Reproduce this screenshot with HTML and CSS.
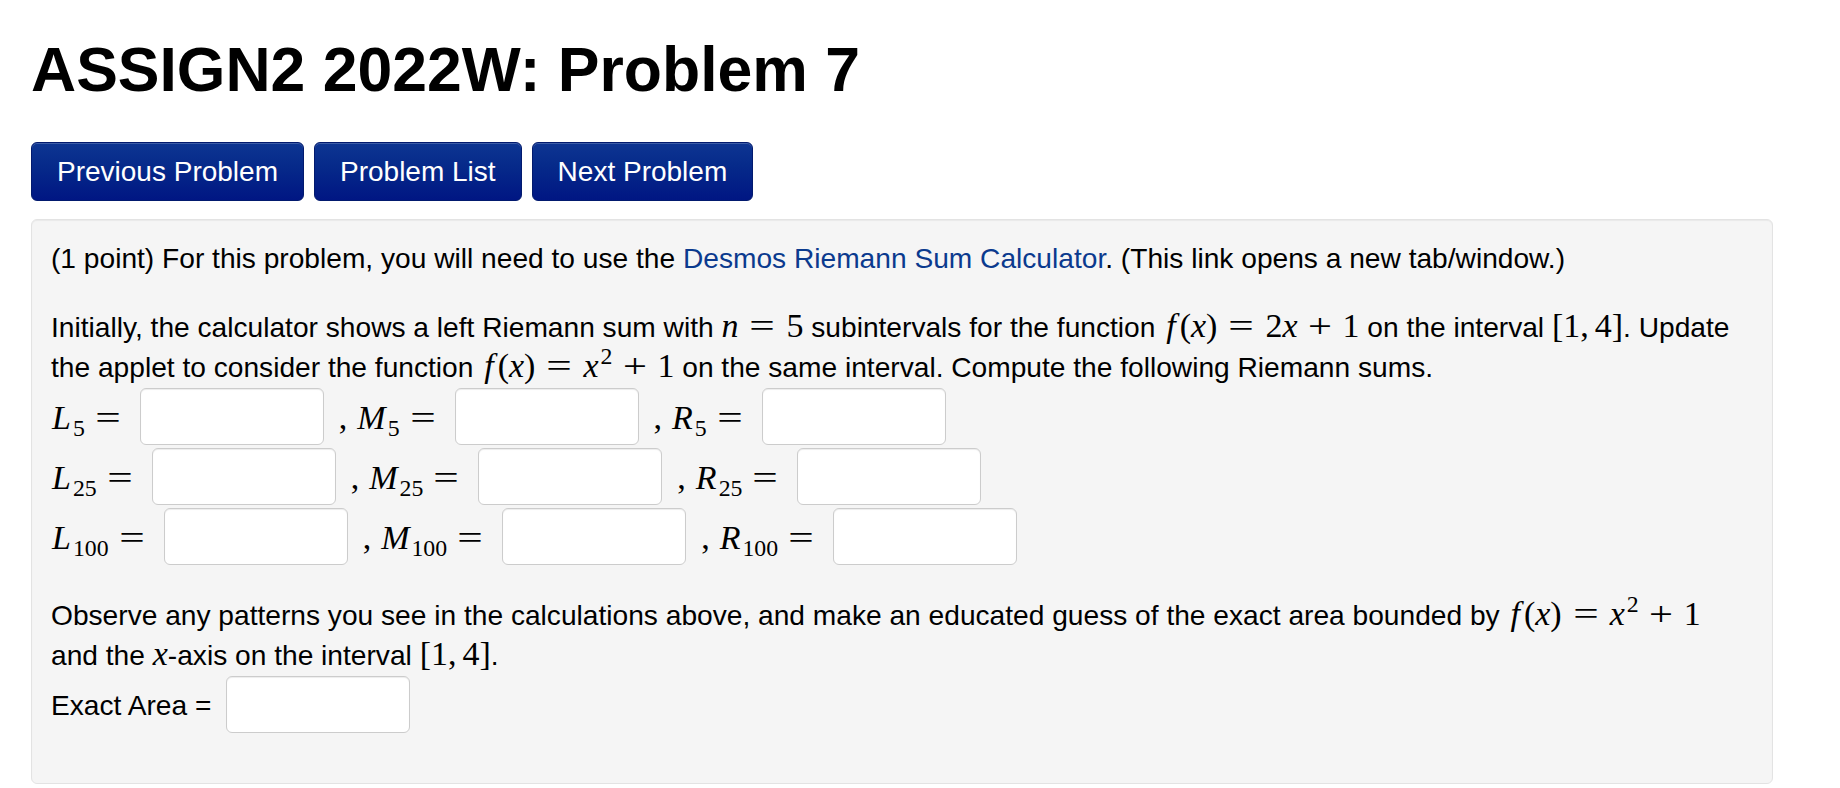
FILE: index.html
```html
<!DOCTYPE html>
<html lang="en">
<head>
<meta charset="utf-8">
<title>ASSIGN2 2022W: Problem 7</title>
<link rel="stylesheet" href="styles.css">
</head>
<body>
<div class="page">
  <h1 class="title">ASSIGN2 2022W: Problem 7</h1>
  <div class="nav">
    <a class="btn" href="#">Previous Problem</a>
    <a class="btn" href="#">Problem List</a>
    <a class="btn" href="#">Next Problem</a>
  </div>
  <div class="well">
    <p class="para first">(1 point) For this problem, you will need to use the <a class="link" href="#">Desmos Riemann Sum Calculator</a>. (This link opens a new tab/window.)</p>
    <p class="para">Initially, the calculator shows a left Riemann sum with <span class="mx"><i>n</i><span class="op">=</span>5</span> subintervals for the function <span class="mx"><i class="fi">f</i>(<i>x</i>)<span class="op">=</span>2<i>x</i><span class="op pl">+</span>1</span> on the interval <span class="mx">[1,<span class="th"></span>4]</span>. Update<br>the applet to consider the function <span class="mx"><i class="fi">f</i>(<i>x</i>)<span class="op">=</span><i>x</i><sup>2</sup><span class="op pl">+</span>1</span> on the same interval. Compute the following Riemann sums.</p>
    <div class="row">
      <span class="mx lab"><i>L</i><sub>5</sub></span><span class="mx eq">=</span><input class="ans" type="text">
      <span class="mx cm">,</span><span class="mx lab"><i>M</i><sub>5</sub></span><span class="mx eq">=</span><input class="ans" type="text">
      <span class="mx cm">,</span><span class="mx lab"><i>R</i><sub>5</sub></span><span class="mx eq">=</span><input class="ans" type="text">
    </div>
    <div class="row">
      <span class="mx lab"><i>L</i><sub>25</sub></span><span class="mx eq">=</span><input class="ans" type="text">
      <span class="mx cm">,</span><span class="mx lab"><i>M</i><sub>25</sub></span><span class="mx eq">=</span><input class="ans" type="text">
      <span class="mx cm">,</span><span class="mx lab"><i>R</i><sub>25</sub></span><span class="mx eq">=</span><input class="ans" type="text">
    </div>
    <div class="row">
      <span class="mx lab"><i>L</i><sub>100</sub></span><span class="mx eq">=</span><input class="ans" type="text">
      <span class="mx cm">,</span><span class="mx lab"><i>M</i><sub>100</sub></span><span class="mx eq">=</span><input class="ans" type="text">
      <span class="mx cm">,</span><span class="mx lab"><i>R</i><sub>100</sub></span><span class="mx eq">=</span><input class="ans" type="text">
    </div>
    <p class="para third">Observe any patterns you see in the calculations above, and make an educated guess of the exact area bounded by <span class="mx"><i class="fi">f</i>(<i>x</i>)<span class="op">=</span><i>x</i><sup>2</sup><span class="op pl">+</span>1</span><br>and the <span class="mx"><i>x</i></span>-axis on the interval <span class="mx">[1,<span class="th"></span>4]</span>.</p>
    <div class="row">
      <span class="txtlab">Exact Area =</span><input class="ans" type="text">
    </div>
  </div>
</div>
</body>
</html>
```

FILE: styles.css
```css
html, body {
  margin: 0;
  padding: 0;
  background: #ffffff;
}

body {
  font-family: "Liberation Sans", Arial, Helvetica, sans-serif;
  color: #000000;
}

.page {
  width: 1742px;
  padding-left: 31px;
}

.title {
  margin: 31px 0 0 0;
  font-size: 62.5px;
  line-height: 76px;
  font-weight: bold;
  color: #000000;
}

.nav {
  display: flex;
  gap: 10px;
  margin-top: 35px;
}

.btn {
  display: flex;
  align-items: center;
  height: 59px;
  box-sizing: border-box;
  padding: 0 25px;
  font-size: 28px;
  color: #ffffff;
  text-decoration: none;
  border: 1px solid #021a6e;
  border-radius: 6px;
  background: linear-gradient(to bottom, #0d3592 0%, #062a8a 40%, #001683 100%);
  box-shadow: inset 0 1px 0 rgba(255, 255, 255, 0.2);
}

.well {
  margin-top: 18px;
  background: #f5f5f5;
  border: 1px solid #e3e3e3;
  border-radius: 6px;
  box-shadow: inset 0 1px 1px rgba(0, 0, 0, 0.05);
  padding: 19px 20px 47px 19px;
  font-size: 28.15px;
  line-height: 40px;
}

.para {
  margin: 0;
  white-space: nowrap;
}

.para.first {
  margin-bottom: 29px;
}

.para.third {
  margin-top: 28px;
}

.para .mx {
  line-height: 1;
}

.link {
  color: #0b3a8e;
  text-decoration: none;
}

.mx {
  font-family: "Liberation Serif", "Times New Roman", serif;
  font-size: 34px;
}

.mx i {
  font-style: italic;
}

.mx i.fi {
  margin: 0 4px 0 3px;
}

.op {
  display: inline-block;
  width: 26px;
  text-align: center;
  margin: 0 11px;
  transform: scaleX(1.33);
}

.op.pl {
  margin: 0 9.5px;
  transform: scaleX(1.25);
}

.th {
  display: inline-block;
  width: 6px;
}

.mx sub,
.mx sup {
  font-size: 0.7em;
  line-height: 0;
  font-style: normal;
}

.mx sub {
  vertical-align: -0.28em;
  margin-left: 2px;
}

.mx sup {
  vertical-align: 0.55em;
  margin-left: 2px;
}

.row {
  display: flex;
  align-items: center;
  height: 60px;
  white-space: nowrap;
}

.row .mx {
  line-height: normal;
}

.row .lab {
  padding-left: 1px;
}

.row .eq {
  display: inline-block;
  width: 26px;
  text-align: center;
  margin: 0 19px 0 10px;
  transform: scaleX(1.33);
}

.row .cm {
  margin-left: 15px;
  margin-right: 9px;
}

.ans {
  width: 184px;
  height: 57px;
  box-sizing: border-box;
  margin: 0;
  padding: 4px 8px;
  background: #ffffff;
  border: 1px solid #cccccc;
  border-radius: 6px;
  box-shadow: inset 0 1px 1px rgba(0, 0, 0, 0.075);
  font-size: 28px;
  font-family: "Liberation Sans", Arial, sans-serif;
  align-self: flex-start;
}

.txtlab {
  margin-right: 15px;
}
```
